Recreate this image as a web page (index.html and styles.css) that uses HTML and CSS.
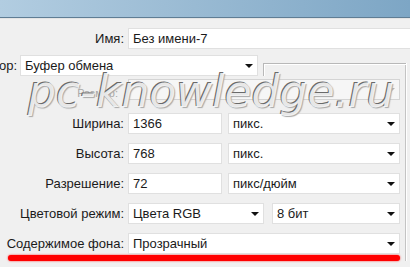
FILE: index.html
```html
<!DOCTYPE html>
<html lang="ru">
  <head>
    <meta charset="utf-8" />
    <link rel="stylesheet" href="styles.css">
  </head>
  <body>
    <div class="titlebar"></div>
    <div class="dialog">
      <div class="row">
        <span class="label">Имя:</span>
        <div class="field field-wide">Без имени-7</div>
      </div>
      <div class="row row-preset">
        <span class="label label-cut">Набор:</span>
        <div class="field select field-preset">Буфер обмена</div>
      </div>
      <div class="group">
        <div class="row">
          <span class="label label-dim">Размер:</span>
          <div class="field select disabled field-grow"></div>
        </div>
        <div class="row row-first">
          <span class="label">Ширина:</span>
          <div class="field field-num">1366</div>
          <div class="field select field-grow">пикс.</div>
        </div>
        <div class="row">
          <span class="label">Высота:</span>
          <div class="field field-num">768</div>
          <div class="field select field-grow">пикс.</div>
        </div>
        <div class="row">
          <span class="label">Разрешение:</span>
          <div class="field field-num">72</div>
          <div class="field select field-grow">пикс/дюйм</div>
        </div>
        <div class="row">
          <span class="label">Цветовой режим:</span>
          <div class="field select field-mode">Цвета RGB</div>
          <div class="field select field-grow">8 бит</div>
        </div>
        <div class="row">
          <span class="label">Содержимое фона:</span>
          <div class="field select field-grow">Прозрачный</div>
        </div>
        <div class="underline"></div>
      </div>
    </div>
    <div class="watermark">pc-knowledge.ru</div>
  </body>
</html>
```

FILE: styles.css
```css
body {
  margin: 0;
  width: 410px;
  height: 267px;
  overflow: hidden;
  background-color: #f0f0f0;
  font-family: "Liberation Sans", Arial, sans-serif;
  font-size: 13px;
  color: #1a1a1a;
}

.titlebar {
  height: 17px;
  background: linear-gradient(to right, #b2cde1, #9dbdd5 40%, #7da6c5);
  border-bottom: 1px solid #5f7d94;
  box-shadow: 0 1px 0 #e4e4e4;
}

.dialog {
  padding-top: 10px;
}

.row {
  display: flex;
  align-items: center;
  height: 21px;
}
.row-preset {
  margin-top: 6px;
}
.row-first {
  margin-top: 4px;
}

.label {
  flex: none;
  width: 124px;
  margin-right: 4px;
  text-align: right;
  white-space: nowrap;
}
.label-cut {
  display: flex;
  justify-content: flex-end;
  width: 17px;
  margin-right: 3px;
  overflow: hidden;
}
.label-dim {
  width: 118px;
  margin-right: 10px;
  font-size: 11px;
  color: #a8a8a8;
  margin-top: 6px;
}

.field {
  box-sizing: border-box;
  height: 21px;
  line-height: 19px;
  padding: 0 4px;
  background-color: #ffffff;
  border: 1px solid #e0e0e0;
  white-space: nowrap;
}
.field-wide {
  flex: 1;
  border-right: none;
}
.field-preset {
  width: 238px;
}
.field-num {
  width: 94px;
  margin-right: 6px;
}
.field-mode {
  width: 136px;
  margin-right: 8px;
}
.field-grow {
  flex: 1;
}

.select {
  position: relative;
}
.select::after {
  content: '';
  position: absolute;
  right: 4px;
  top: 8px;
  border-style: solid;
  border-width: 4px 4px 0 4px;
  border-color: #111111 transparent transparent transparent;
}
.disabled {
  background-color: #f6f6f6;
  border-color: #d4d4d4;
}
.disabled::after {
  border-top-color: #b4b4b4;
}

.group {
  position: relative;
  display: flex;
  flex-direction: column;
  gap: 9px;
  margin-top: -13px;
  margin-right: 4px;
  padding: 16px 5px 0 0;
  border-right: 1px solid #c4c4c4;
  box-shadow: 1px 0 0 #ffffff;
}
.group::before {
  content: '';
  position: absolute;
  top: 0;
  left: 263px;
  right: -1px;
  height: 12px;
  border-top: 1px solid #b8b8b8;
  border-left: 1px solid #b8b8b8;
  box-shadow: inset 1px 1px 0 #ffffff;
}

.underline {
  height: 6px;
  margin: -8px 0 0 8px;
  width: 392px;
  border-radius: 3px;
  background-color: #ff0000;
  box-shadow: 0 0 2px #ff2020;
}

.watermark {
  position: absolute;
  top: 70px;
  left: 28px;
  font-family: "DejaVu Sans", sans-serif;
  font-weight: 200;
  font-style: italic;
  font-size: 44px;
  line-height: 1;
  color: rgba(255, 255, 255, 0.85);
  text-shadow: -1px -1px 0 #6a6a6a, 1px 1px 1px #a8a8a8;
  white-space: nowrap;
}
```
